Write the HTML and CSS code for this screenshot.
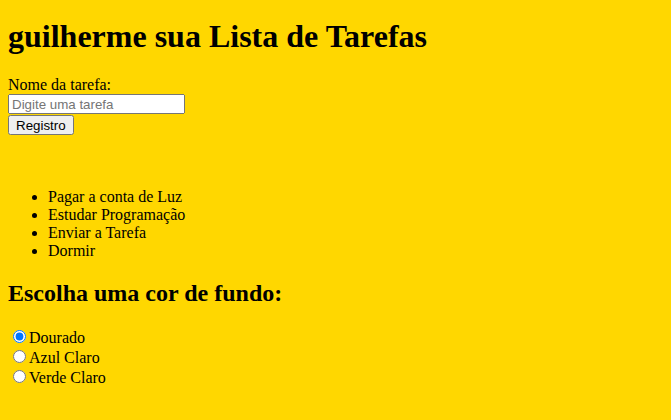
FILE: index.html
```html
<!DOCTYPE html>
<html lang="pt-BR">
<head>
<meta charset="utf-8">
<title>Lista de Tarefas</title>
<link rel="stylesheet" href="styles.css">
</head>
<body class="page">
<h1 class="title">guilherme sua Lista de Tarefas</h1>
<form class="task-form">
<label class="task-label" for="tarefa">Nome da tarefa:</label><br>
<input class="task-input" id="tarefa" type="text" placeholder="Digite uma tarefa"><br>
<button class="task-button" type="button">Registro</button>
</form>
<ul class="empty-list"></ul>
<ul class="task-list">
<li>Pagar a conta de Luz</li>
<li>Estudar Programação</li>
<li>Enviar a Tarefa</li>
<li>Dormir</li>
</ul>
<h2 class="subtitle">Escolha uma cor de fundo:</h2>
<div class="colors">
<input class="radio" type="radio" name="cor" id="c1" checked><label for="c1">Dourado</label><br>
<input class="radio" type="radio" name="cor" id="c2"><label for="c2">Azul Claro</label><br>
<input class="radio" type="radio" name="cor" id="c3"><label for="c3">Verde Claro</label>
</div>
</body>
</html>
```
FILE: styles.css
```css
.page {
  background: #ffd700;
  font-family: "Liberation Serif", serif;
  color: #000;
}
.title {
  margin-top: 10px;
}
.task-input, .task-button {
  font-family: "Liberation Sans", sans-serif;
  font-size: 13.33px;
}
.task-input {
  box-sizing: border-box;
  width: 177px;
  height: 20px;
}
.task-button {
  height: 20px;
  margin-top: 1px;
}
.empty-list {
  min-height: 21px;
}
.colors {
  margin-top: 16px;
}
```
